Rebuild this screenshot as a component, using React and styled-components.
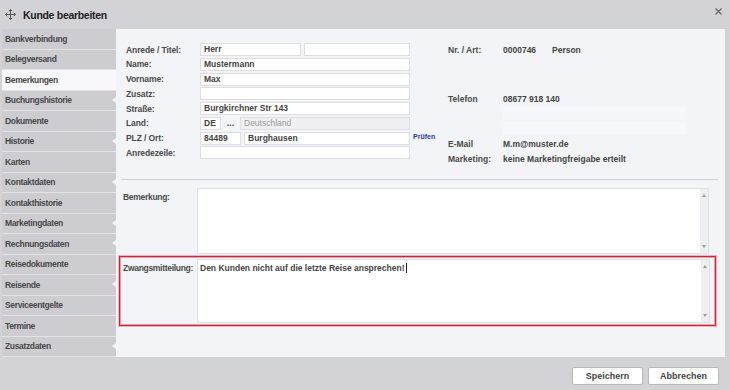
import styled, { createGlobalStyle } from "styled-components";

const GlobalStyle = createGlobalStyle`
  html, body {
    margin: 0;
    padding: 0;
    background: #d3d2d6;
  }
  * {
    box-sizing: border-box;
  }
`;

const menuItems = [
  { label: "Bankverbindung" },
  { label: "Belegversand" },
  { label: "Bemerkungen", active: true },
  { label: "Buchungshistorie", notch: true },
  { label: "Dokumente" },
  { label: "Historie", notch: true },
  { label: "Karten" },
  { label: "Kontaktdaten", notch: true },
  { label: "Kontakthistorie" },
  { label: "Marketingdaten", notch: true },
  { label: "Rechnungsdaten", notch: true },
  { label: "Reisedokumente" },
  { label: "Reisende", notch: true },
  { label: "Serviceentgelte" },
  { label: "Termine" },
  { label: "Zusatzdaten", notch: true },
];

function MoveIcon() {
  return (
    <svg width="11" height="11" viewBox="0 0 11 11" fill="none" stroke="#555" strokeWidth="1">
      <path d="M5.5 0.5v10M0.5 5.5h10" />
      <path d="M3.8 2.2L5.5 0.5L7.2 2.2M3.8 8.8L5.5 10.5L7.2 8.8M2.2 3.8L0.5 5.5L2.2 7.2M8.8 3.8L10.5 5.5L8.8 7.2" />
    </svg>
  );
}

function CloseIcon() {
  return (
    <svg width="7" height="7" viewBox="0 0 7 7" stroke="#6a6a6a" strokeWidth="1.4">
      <path d="M0.5 0.5L6.5 6.5M6.5 0.5L0.5 6.5" />
    </svg>
  );
}

function ScrollBar() {
  return (
    <Scroll>
      <Arrow $up />
      <Arrow />
    </Scroll>
  );
}

export default function App() {
  return (
    <>
      <GlobalStyle />
      <Window>
        <Header>
          <Title>
            <MoveIcon />
            <span>Kunde bearbeiten</span>
          </Title>
          <CloseButton>
            <CloseIcon />
          </CloseButton>
        </Header>

        <Body>
          <Sidebar>
            {menuItems.map(item => (
              <MenuItem key={item.label} $active={item.active} $notch={item.notch}>
                {item.label}
              </MenuItem>
            ))}
          </Sidebar>

          <Panel>
            <TopSection>
              <Form>
                <Label>Anrede / Titel:</Label>
                <Fields>
                  <Input $w="101px">Herr</Input>
                  <Input />
                </Fields>
                <Label>Name:</Label>
                <Fields>
                  <Input>Mustermann</Input>
                </Fields>
                <Label>Vorname:</Label>
                <Fields>
                  <Input>Max</Input>
                </Fields>
                <Label>Zusatz:</Label>
                <Fields>
                  <Input />
                </Fields>
                <Label>Straße:</Label>
                <Fields>
                  <Input>Burgkirchner Str 143</Input>
                </Fields>
                <Label>Land:</Label>
                <Fields>
                  <Input $w="21px">DE</Input>
                  <Dots>...</Dots>
                  <Input $disabled>Deutschland</Input>
                </Fields>
                <Label>PLZ / Ort:</Label>
                <Fields>
                  <Input $w="41px">84489</Input>
                  <Input>Burghausen</Input>
                  <CheckLink>Prüfen</CheckLink>
                </Fields>
                <Label>Anredezeile:</Label>
                <Fields>
                  <Input />
                </Fields>
              </Form>

              <Info>
                <InfoRow>
                  <InfoLabel>Nr. / Art:</InfoLabel>
                  <InfoValue $w="49px">0000746</InfoValue>
                  <InfoValue>Person</InfoValue>
                </InfoRow>
                <InfoRow $gap="36px">
                  <InfoLabel>Telefon</InfoLabel>
                  <InfoValue>08677 918 140</InfoValue>
                </InfoRow>
                <Ghost />
                <Ghost />
                <InfoRow $gap="2px">
                  <InfoLabel>E-Mail</InfoLabel>
                  <InfoValue>M.m@muster.de</InfoValue>
                </InfoRow>
                <InfoRow>
                  <InfoLabel>Marketing:</InfoLabel>
                  <InfoValue>keine Marketingfreigabe erteilt</InfoValue>
                </InfoRow>
              </Info>
            </TopSection>

            <Divider />

            <NoteRow>
              <NoteLabel>Bemerkung:</NoteLabel>
              <NoteBox>
                <NoteText />
                <ScrollBar />
              </NoteBox>
            </NoteRow>

            <AlertRow>
              <NoteLabel>Zwangsmitteilung:</NoteLabel>
              <NoteBox>
                <NoteText>
                  Den Kunden nicht auf die letzte Reise ansprechen!
                  <Caret />
                </NoteText>
                <ScrollBar />
              </NoteBox>
            </AlertRow>
          </Panel>
        </Body>

        <Footer>
          <Button>Speichern</Button>
          <Button>Abbrechen</Button>
        </Footer>
      </Window>
    </>
  );
}

const Window = styled.div`
  width: 730px;
  height: 390px;
  display: flex;
  flex-direction: column;
  background: #d3d2d6;
  font-family: "Liberation Sans", Arial, sans-serif;
  color: #444;
  overflow: hidden;
`;

const Header = styled.div`
  height: 29px;
  flex-shrink: 0;
  display: flex;
  align-items: center;
  justify-content: space-between;
  padding: 0 8px 0 5px;
`;

const Title = styled.div`
  display: flex;
  align-items: center;
  gap: 7px;
  font-size: 10.5px;
  font-weight: 700;
  color: #222;
  letter-spacing: -0.3px;
`;

const CloseButton = styled.div`
  display: flex;
  align-items: center;
  margin-top: -6px;
`;

const Body = styled.div`
  height: 328px;
  display: flex;
  padding-right: 5px;
`;

const Sidebar = styled.div`
  width: 116px;
  flex-shrink: 0;
  padding-left: 2px;
  display: flex;
  flex-direction: column;
`;

const MenuItem = styled.div`
  position: relative;
  height: 20.5px;
  display: flex;
  align-items: center;
  padding-left: 3px;
  border-bottom: 1px solid #e3e3e7;
  background: ${p => (p.$active ? "#f8f8fb" : "#cdccd1")};
  font-size: 8.5px;
  font-weight: 700;
  color: #484848;
  letter-spacing: -0.35px;

  &::after {
    content: "";
    display: ${p => (p.$notch ? "block" : "none")};
    position: absolute;
    right: 0;
    top: 50%;
    margin-top: -3.5px;
    border-style: solid;
    border-width: 3.5px 4px 3.5px 0;
    border-color: transparent #f3f4f8 transparent transparent;
  }
`;

const Panel = styled.div`
  flex: 1;
  background: #f3f4f8;
  padding: 14px 9px 0 3px;
  display: flex;
  flex-direction: column;
`;

const TopSection = styled.div`
  display: flex;
  padding-left: 7px;
  height: 136px;
`;

const Form = styled.div`
  display: grid;
  grid-template-columns: 74px 233px;
  grid-auto-rows: 13px;
  row-gap: 1.75px;
  align-items: center;
`;

const Label = styled.div`
  font-size: 8.5px;
  font-weight: 700;
  color: #4a4a4a;
  letter-spacing: -0.1px;
  white-space: nowrap;
`;

const Fields = styled.div`
  display: flex;
  align-items: center;
  gap: 3px;
  height: 13px;
  width: 210px;
  position: relative;
`;

const Input = styled.div`
  height: 13px;
  flex: ${p => (p.$w ? `0 0 ${p.$w}` : "1")};
  background: ${p => (p.$disabled ? "#f0f0f2" : "#fff")};
  border: 1px solid #dedee2;
  padding-left: 3px;
  font-size: 8.5px;
  line-height: 11px;
  color: ${p => (p.$disabled ? "#999" : "#444")};
  font-weight: ${p => (p.$disabled ? 400 : 700)};
  white-space: nowrap;
  overflow: hidden;
`;

const Dots = styled.span`
  width: 13px;
  text-align: center;
  font-size: 9px;
  font-weight: 700;
  color: #444;
  line-height: 9px;
`;

const CheckLink = styled.span`
  position: absolute;
  left: 213px;
  top: 1px;
  font-size: 7px;
  font-weight: 700;
  color: #2a3aa8;
`;

const Info = styled.div`
  margin-left: 15px;
  display: flex;
  flex-direction: column;
`;

const InfoRow = styled.div`
  display: flex;
  align-items: center;
  height: 13px;
  margin-top: ${p => p.$gap || "2px"};
  &:first-child {
    margin-top: 0;
  }
`;

const Ghost = styled.div`
  height: 13px;
  width: 183px;
  margin: 2px 0 0 55px;
  background: #f6f7fa;
`;

const InfoLabel = styled.div`
  width: 55px;
  font-size: 8.5px;
  font-weight: 700;
  color: #4a4a4a;
`;

const InfoValue = styled.div`
  width: ${p => p.$w || "auto"};
  font-size: 8.5px;
  font-weight: 700;
  color: #444;
`;

const Divider = styled.div`
  height: 1px;
  margin: 0 -2px 0 2px;
  background: #d2d2d6;
`;

const NoteRow = styled.div`
  display: flex;
  margin-top: 8px;
  margin-right: 7px;
  padding-left: 4px;
  height: 66px;
`;

const AlertRow = styled.div`
  display: flex;
  margin-top: 2px;
  height: 70px;
  padding: 2px 5px 2px 3px;
  border: 1px solid #c8263a;
  box-shadow: 0 0 0 1px #f0b4bc, inset 0 0 0 1px #e8a0aa;
`;

const NoteLabel = styled.div`
  width: 74px;
  flex-shrink: 0;
  padding-top: 4px;
  font-size: 8.5px;
  font-weight: 700;
  color: #4a4a4a;
  letter-spacing: -0.3px;
  white-space: nowrap;
`;

const NoteBox = styled.div`
  flex: 1;
  display: flex;
  background: #fff;
  border: 1px solid #e2e2e6;
`;

const NoteText = styled.div`
  flex: 1;
  padding: 3px 2px;
  font-size: 8.5px;
  font-weight: 700;
  color: #444;
  display: flex;
  align-items: flex-start;
`;

const Caret = styled.span`
  display: inline-block;
  width: 1px;
  height: 10px;
  margin-left: 1px;
  background: #222;
`;

const Scroll = styled.div`
  width: 8px;
  background: #efeff1;
  display: flex;
  flex-direction: column;
  justify-content: space-between;
  align-items: center;
  padding: 5px 0;
`;

const Arrow = styled.span`
  width: 0;
  height: 0;
  border-left: 2px solid transparent;
  border-right: 2px solid transparent;
  ${p =>
    p.$up
      ? "border-bottom: 3px solid #999;"
      : "border-top: 3px solid #999;"}
`;

const Footer = styled.div`
  flex: 1;
  display: flex;
  justify-content: flex-end;
  align-items: center;
  gap: 5px;
  padding: 4px 11px 0 0;
`;

const Button = styled.button`
  width: 71px;
  height: 18px;
  background: #fff;
  border: 1px solid #b9b9bd;
  border-radius: 2px;
  font-family: "Liberation Sans", Arial, sans-serif;
  font-size: 9px;
  font-weight: 700;
  color: #444;
  cursor: pointer;
  padding: 0;
`;
